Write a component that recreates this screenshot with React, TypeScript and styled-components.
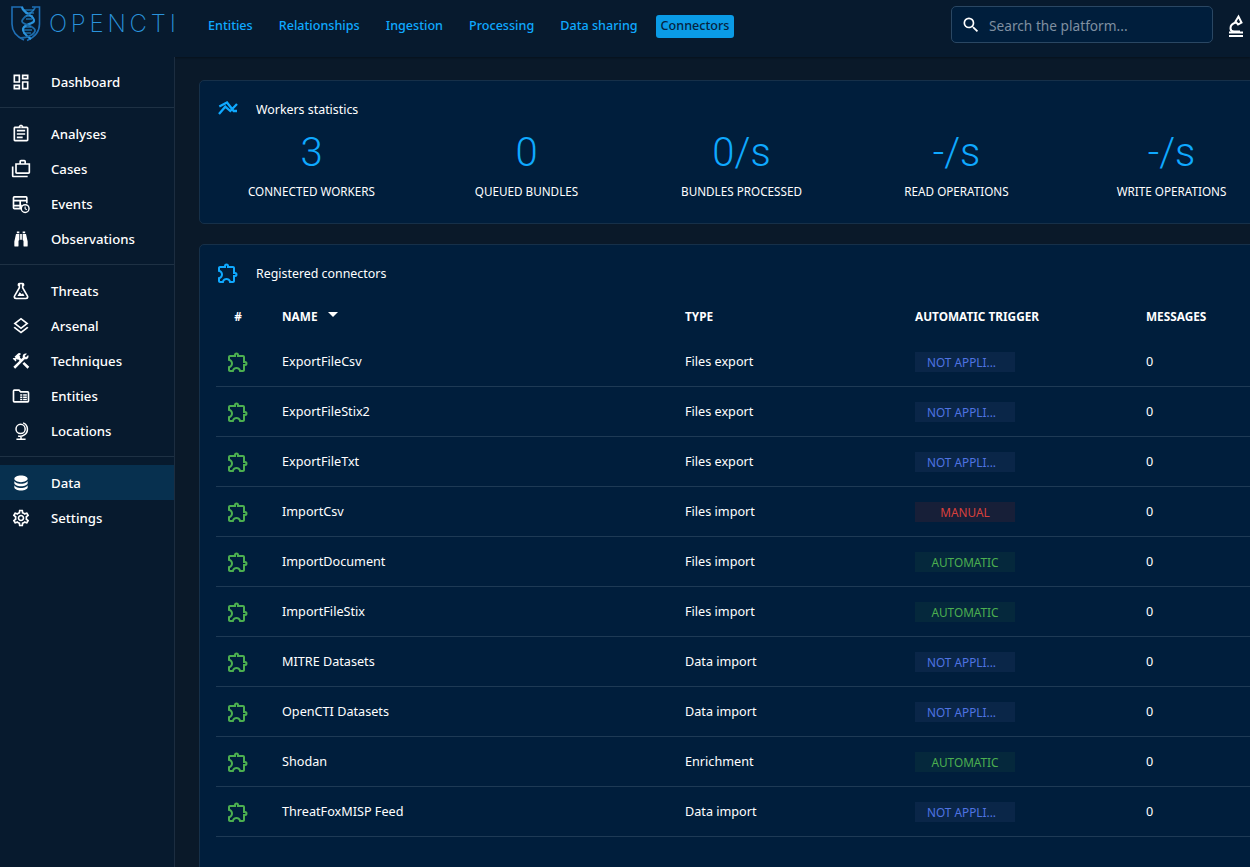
import { FC, ReactNode } from "react";
import styled, { createGlobalStyle } from "styled-components";
import {
    MdOutlineAssignment,
    MdOutlineCases,
    MdOutlineConstruction,
    MdOutlineDashboard,
    MdOutlineExtension,
    MdOutlineLayers,
    MdOutlineSettings,
    MdSearch,
} from "react-icons/md";

const FONT = `"Noto Sans", "Open Sans", sans-serif`;
const BLUE = "#0fa9ff";

const GlobalStyle = createGlobalStyle`
    html, body {
        margin: 0;
        padding: 0;
        height: 100%;
        overflow: hidden;
        background: #0a1929;
    }
    body {
        font-family: ${FONT};
        color: #ffffff;
    }
`;

const Page = styled.div`
    width: 1250px;
    height: 867px;
    overflow: hidden;
    display: flex;
    flex-direction: column;
    background: #0a1929;
`;

/* top bar */
const TopBar = styled.header`
    flex: 0 0 57px;
    display: flex;
    align-items: flex-start;
    background: #071a2e;
    box-shadow: 0 1px 2px rgba(0, 0, 0, 0.35);
`;

const LogoBox = styled.div`
    width: 208px;
    flex: 0 0 208px;
    display: flex;
    align-items: center;
    padding: 5px 0 0 10px;
    box-sizing: border-box;
    gap: 8px;
`;

const LogoText = styled.span`
    font-family: "Inter", sans-serif;
    font-size: 24px;
    font-weight: 200;
    letter-spacing: 3.8px;
    line-height: 33px;
    color: #2a93dc;
`;

const TopNav = styled.nav`
    display: flex;
    gap: 16px;
    margin-left: -5px;
    padding-top: 15px;
    width: 748px;
`;

const TopLink = styled.span<{ $active?: boolean }>`
    font-size: 12.6px;
    font-weight: 500;
    line-height: 22px;
    height: 23px;
    padding: 0 5px;
    margin-left: ${(p) => (p.$active ? "-3px" : "0")};
    border-radius: 3px;
    white-space: nowrap;
    color: ${(p) => (p.$active ? "#06233f" : BLUE)};
    background: ${(p) => (p.$active ? "#0a9be6" : "transparent")};
`;

const SearchBox = styled.div`
    margin-top: 6px;
    width: 262px;
    height: 37px;
    box-sizing: border-box;
    display: flex;
    align-items: center;
    gap: 8px;
    padding: 1px 0 0 9px;
    background: #001e3c;
    border: 1px solid #2a4763;
    border-radius: 5px;
    color: #ffffff;
    font-size: 20px;
`;

const SearchHint = styled.span`
    font-size: 13.7px;
    color: #7f8fa0;
`;

const LabButton = styled.div`
    margin: 14px 0 0 12px;
    width: 24px;
    height: 24px;
    color: #ffffff;
`;

/* body */
const Body = styled.div`
    flex: 1;
    display: flex;
    min-height: 0;
`;

const SideBar = styled.aside`
    flex: 0 0 175px;
    box-sizing: border-box;
    border-right: 1px solid #1c2d40;
    background: #071a2e;
    padding-top: 7px;
`;

const SideGroup = styled.div`
    padding: 0 0 8px;
    margin-bottom: 8px;
    border-bottom: 1px solid #1e3144;

    &:last-child {
        border-bottom: 0;
    }
`;

const SideItem = styled.div<{ $active?: boolean }>`
    height: 35px;
    display: flex;
    align-items: center;
    padding-left: 11px;
    gap: 20px;
    font-size: 13.2px;
    font-weight: 500;
    color: #ffffff;
    background: ${(p) => (p.$active ? "#07304f" : "transparent")};

    svg {
        flex: 0 0 20px;
        width: 20px;
        height: 20px;
    }
`;

const Content = styled.main`
    flex: 1;
    min-width: 0;
    padding: 23px 0 0 24px;
    display: flex;
    flex-direction: column;
    gap: 20px;
`;

const Card = styled.section<{ $height: number }>`
    width: 1090px;
    height: ${(p) => p.$height}px;
    flex: none;
    box-sizing: border-box;
    background: #001e3c;
    border: 1px solid #163049;
    border-radius: 5px;
    padding: 0 0 0 16px;
`;

const CardHead = styled.div`
    display: flex;
    align-items: center;
    gap: 16px;
    height: 24px;
    padding-top: 16px;
    font-size: 12.4px;
    color: #ffffff;

    svg {
        flex: 0 0 24px;
        width: 24px;
        height: 24px;
        color: ${BLUE};
    }
`;

const StatGrid = styled.div`
    display: grid;
    grid-template-columns: repeat(5, 215px);
    margin: 8px 0 0 -12px;
`;

const Stat = styled.div`
    display: flex;
    flex-direction: column;
    align-items: center;
`;

const StatValue = styled.div`
    font-family: "Roboto", sans-serif;
    font-size: 40px;
    font-weight: 300;
    line-height: 48px;
    color: ${BLUE};
`;

const StatLabel = styled.div`
    margin-top: 5px;
    font-size: 11.7px;
    line-height: 18px;
    white-space: nowrap;
    color: #ffffff;
`;

const TableHead = styled.div`
    display: grid;
    grid-template-columns: 66px 403px 230px 231px 1fr;
    align-items: center;
    height: 36px;
    margin: 13px 0 3px;
    font-size: 11.8px;
    font-weight: 700;
`;

const HashCell = styled.div`
    text-align: center;
    padding-right: 22px;
    box-sizing: border-box;
`;

const SortCell = styled.div`
    display: flex;
    align-items: center;
    gap: 10px;
`;

const SortArrow = styled.span`
    width: 0;
    height: 0;
    margin-top: -3px;
    border-left: 5px solid transparent;
    border-right: 5px solid transparent;
    border-top: 5px solid #ffffff;
`;

const Row = styled.div`
    display: grid;
    grid-template-columns: 66px 403px 230px 231px 1fr;
    align-items: center;
    height: 50px;
    box-sizing: border-box;
    border-bottom: 1px solid #1e3a55;
    font-size: 12.65px;
    color: #ffffff;
`;

const Cell = styled.div`
    padding-bottom: 2px;
`;

const RowIcon = styled.div`
    display: flex;
    padding-left: 10px;
    color: #4caf50;

    svg {
        width: 24px;
        height: 24px;
    }
`;

const Chip = styled.span<{ $fg: string; $bg: string; $cut?: boolean }>`
    display: block;
    width: 100px;
    height: 20px;
    box-sizing: border-box;
    line-height: 20px;
    text-align: center;
    font-size: 11.8px;
    padding-right: ${(p) => (p.$cut ? "7px" : "0")};
    color: ${(p) => p.$fg};
    background: ${(p) => p.$bg};
`;

/* drawn icons with no match in the icon packages */
const Svg: FC<{ children: ReactNode }> = ({ children }) => (
    <svg viewBox="0 0 24 24" fill="currentColor">
        {children}
    </svg>
);

const TableClockIcon = () => (
    <Svg>
        <path d="M4 2.5h14A2 2 0 0 1 20 4.5V11h-2V9h-6v4h1v2h-1v3.5H4a2 2 0 0 1-2-2v-12a2 2 0 0 1 2-2zm0 2V7h14V4.5H4zM4 9v4h6V9H4zm0 6v1.5h6V15H4z" />
        <path d="M17 12a5.5 5.5 0 1 1 0 11 5.5 5.5 0 0 1 0-11zm0 1.7a3.8 3.8 0 1 0 0 7.6 3.8 3.8 0 0 0 0-7.6zm-.7 1.3h1.3v2.4l1.7 1-.7 1.1-2.3-1.4V15z" />
    </Svg>
);

const BinocularsIcon = () => (
    <Svg>
        <path d="M11,6H13V13H11V6M9,20A1,1 0 0,1 8,21H5A1,1 0 0,1 4,20V15L6,6H10V13A1,1 0 0,1 9,14V20M10,5H7V3H10V5M15,20V14A1,1 0 0,1 14,13V6H18L20,15V20A1,1 0 0,1 19,21H16A1,1 0 0,1 15,20M14,5V3H17V5H14Z" />
    </Svg>
);

const FlaskIcon = () => (
    <Svg>
        <path d="M5,19A1,1 0 0,0 6,20H18A1,1 0 0,0 19,19C19,18.79 18.93,18.59 18.82,18.43L13,8.35V4H11V8.35L5.18,18.43C5.07,18.59 5,18.79 5,19M6,22A3,3 0 0,1 3,19C3,18.4 3.18,17.84 3.5,17.37L9,7.81V6A1,1 0 0,1 8,5V4A2,2 0 0,1 10,2H14A2,2 0 0,1 16,4V5A1,1 0 0,1 15,6V7.81L20.5,17.37C20.82,17.84 21,18.4 21,19A3,3 0 0,1 18,22H6M13,16L14.34,14.66L16.27,18H7.73L10.39,13.39L13,16M12.5,12A0.5,0.5 0 0,1 13,12.5A0.5,0.5 0 0,1 12.5,13A0.5,0.5 0 0,1 12,12.5A0.5,0.5 0 0,1 12.5,12Z" />
    </Svg>
);

const FolderTableIcon = () => (
    <Svg>
        <path d="M4 4h6l2 2h8a2 2 0 0 1 2 2v10a2 2 0 0 1-2 2H4a2 2 0 0 1-2-2V6a2 2 0 0 1 2-2zm0 2v12h16V8h-8.8l-2-2H4z" />
        <path d="M11 10h2.6v1.8H11V10zm3.6 0H19v1.8h-4.4V10zM11 12.7h2.6v1.8H11v-1.8zm3.6 0H19v1.8h-4.4v-1.8zM11 15.3h2.6v1.8H11v-1.8zm3.6 0H19v1.8h-4.4v-1.8z" />
    </Svg>
);

const GlobeIcon = () => (
    <svg viewBox="0 0 24 24" fill="none" stroke="currentColor" strokeWidth="1.8">
        <circle cx="11.5" cy="9.5" r="5.5" />
        <path d="M14.5 2.2a8.2 8.2 0 0 1 1 14.8A8.2 8.2 0 0 1 8.5 18M12 18.5v3.5M6.5 22h11" />
    </svg>
);

const DatabaseIcon = () => (
    <Svg>
        <path d="M12,3C7.58,3 4,4.79 4,7C4,9.21 7.58,11 12,11C16.42,11 20,9.21 20,7C20,4.79 16.42,3 12,3M4,9V12C4,14.21 7.58,16 12,16C16.42,16 20,14.21 20,12V9C20,11.21 16.42,13 12,13C7.58,13 4,11.21 4,9M4,14V17C4,19.21 7.58,21 12,21C16.42,21 20,19.21 20,17V14C20,16.21 16.42,18 12,18C7.58,18 4,16.21 4,14Z" />
    </Svg>
);

const MicroscopeIcon = () => (
    <svg viewBox="0 0 24 24" fill="none" stroke="currentColor" strokeWidth="2">
        <path d="M11 8.5C7 9.5 5.5 12 5.5 14.2c0 2 1.5 3.3 3.5 3.3h6" />
        <path d="M10.5 7.5l3-5 3 6-3.5 2z" />
        <path d="M4 18.5h14M4 22h14" />
    </svg>
);

const WorkersIcon = () => (
    <svg viewBox="0 0 24 24" fill="none" stroke="currentColor" strokeWidth="2.3">
        <path d="M3 17l6.3-7.3 5 4.3L21 7M3.3 9.5L11 5.5 17.7 14H21" />
    </svg>
);

const Logo = () => (
    <svg width="31" height="37" viewBox="0 0 31 37" fill="none">
        <path d="M13 2H2V19C2 27.5 8.5 32.5 14 35" stroke="#1f6fb5" strokeWidth="1.6" />
        <path d="M22 2H29.5V19C29.5 27 24 32.5 17 35.5" stroke="#1f6fb5" strokeWidth="1.6" />
        <path d="M12 2C13 9 25 10 24 16C23.5 19 14 19 13 24C12.5 28 18 32 21 34" stroke="#2a93dc" strokeWidth="2.2" />
        <path d="M25 2C25 8 13 10 12 16C11.5 20 24 20 25 25C25.5 29 17 33 11 33" stroke="#1c6aa8" strokeWidth="1.8" />
        <path d="M14 5H24M15 8H24M16 11H23M16 14H22M13 22H21M12 25H22M13 28H21" stroke="#2a93dc" strokeWidth="1" />
    </svg>
);

type Connector = {
    name: string;
    type: string;
    trigger: "na" | "manual" | "auto";
};

const connectors: Connector[] = [
    { name: "ExportFileCsv", type: "Files export", trigger: "na" },
    { name: "ExportFileStix2", type: "Files export", trigger: "na" },
    { name: "ExportFileTxt", type: "Files export", trigger: "na" },
    { name: "ImportCsv", type: "Files import", trigger: "manual" },
    { name: "ImportDocument", type: "Files import", trigger: "auto" },
    { name: "ImportFileStix", type: "Files import", trigger: "auto" },
    { name: "MITRE Datasets", type: "Data import", trigger: "na" },
    { name: "OpenCTI Datasets", type: "Data import", trigger: "na" },
    { name: "Shodan", type: "Enrichment", trigger: "auto" },
    { name: "ThreatFoxMISP Feed", type: "Data import", trigger: "na" },
];

const chips = {
    na: { label: "NOT APPLI...", fg: "#4f74e3", bg: "#0a2648" },
    manual: { label: "MANUAL", fg: "#d9403c", bg: "#171f38" },
    auto: { label: "AUTOMATIC", fg: "#4caf50", bg: "#05283c" },
};

const stats = [
    { value: "3", label: "CONNECTED WORKERS" },
    { value: "0", label: "QUEUED BUNDLES" },
    { value: "0/s", label: "BUNDLES PROCESSED" },
    { value: "-/s", label: "READ OPERATIONS" },
    { value: "-/s", label: "WRITE OPERATIONS" },
];

const topLinks = ["Entities", "Relationships", "Ingestion", "Processing", "Data sharing"];

const App = () => (
    <Page>
        <GlobalStyle />
        <TopBar>
            <LogoBox>
                <Logo />
                <LogoText>OPENCTI</LogoText>
            </LogoBox>
            <TopNav>
                {topLinks.map((link) => (
                    <TopLink key={link}>{link}</TopLink>
                ))}
                <TopLink $active>Connectors</TopLink>
            </TopNav>
            <SearchBox>
                <MdSearch />
                <SearchHint>Search the platform...</SearchHint>
            </SearchBox>
            <LabButton>
                <MicroscopeIcon />
            </LabButton>
        </TopBar>
        <Body>
            <SideBar>
                <SideGroup>
                    <SideItem><MdOutlineDashboard />Dashboard</SideItem>
                </SideGroup>
                <SideGroup>
                    <SideItem><MdOutlineAssignment />Analyses</SideItem>
                    <SideItem><MdOutlineCases />Cases</SideItem>
                    <SideItem><TableClockIcon />Events</SideItem>
                    <SideItem><BinocularsIcon />Observations</SideItem>
                </SideGroup>
                <SideGroup>
                    <SideItem><FlaskIcon />Threats</SideItem>
                    <SideItem><MdOutlineLayers />Arsenal</SideItem>
                    <SideItem><MdOutlineConstruction />Techniques</SideItem>
                    <SideItem><FolderTableIcon />Entities</SideItem>
                    <SideItem><GlobeIcon />Locations</SideItem>
                </SideGroup>
                <SideGroup>
                    <SideItem $active><DatabaseIcon />Data</SideItem>
                    <SideItem><MdOutlineSettings />Settings</SideItem>
                </SideGroup>
            </SideBar>
            <Content>
                <Card $height={144}>
                    <CardHead>
                        <WorkersIcon />
                        Workers statistics
                    </CardHead>
                    <StatGrid>
                        {stats.map((s) => (
                            <Stat key={s.label}>
                                <StatValue>{s.value}</StatValue>
                                <StatLabel>{s.label}</StatLabel>
                            </Stat>
                        ))}
                    </StatGrid>
                </Card>
                <Card $height={640}>
                    <CardHead>
                        <MdOutlineExtension />
                        Registered connectors
                    </CardHead>
                    <TableHead>
                        <HashCell>#</HashCell>
                        <SortCell>NAME<SortArrow /></SortCell>
                        <div>TYPE</div>
                        <div>AUTOMATIC TRIGGER</div>
                        <div>MESSAGES</div>
                    </TableHead>
                    {connectors.map((c) => {
                        const chip = chips[c.trigger];
                        return (
                            <Row key={c.name}>
                                <RowIcon><MdOutlineExtension /></RowIcon>
                                <Cell>{c.name}</Cell>
                                <Cell>{c.type}</Cell>
                                <div>
                                    <Chip $fg={chip.fg} $bg={chip.bg} $cut={c.trigger === "na"}>{chip.label}</Chip>
                                </div>
                                <Cell>0</Cell>
                            </Row>
                        );
                    })}
                </Card>
            </Content>
        </Body>
    </Page>
);

export default App;
